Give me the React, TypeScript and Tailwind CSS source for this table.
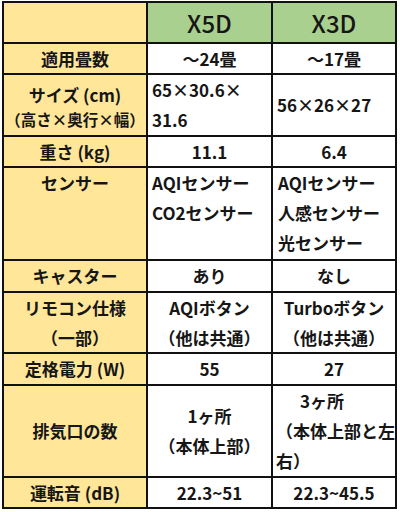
const Y = "bg-[#ffe699]";
const cell = "flex items-center justify-center text-center bg-white";
const head = `flex items-center justify-center text-center ${Y}`;

export default function App() {
  return (
    <div
      className="min-h-[512px] w-[400px] bg-white text-[#161616]"
      style={{ fontFamily: '"Noto Sans CJK JP", "Noto Sans", sans-serif' }}
    >
      <div className="ml-[2px] pt-[1px]">
        <div className="grid w-[395px] grid-cols-[142px_123px_122px] grid-rows-[39px_29px_60px_29px_91px_30px_59px_30px_90px_29px] gap-[2px] border-2 border-[#111] bg-[#111] text-[17px] font-bold leading-[30px]">
          {/* header */}
          <div className={Y} />
          <div className="flex items-center justify-center bg-[#a9d08e] text-[24px] font-medium">X5D</div>
          <div className="flex items-center justify-center bg-[#a9d08e] text-[24px] font-medium">X3D</div>

          {/* 適用畳数 */}
          <div className={head}>適用畳数</div>
          <div className={cell}>～24畳</div>
          <div className={cell}>～17畳</div>

          {/* サイズ */}
          <div className={`${head} flex-col leading-[25px] pt-[3px]`}>
            <span>サイズ (cm)</span>
            <span className="text-[15.5px]">（高さ×奥行×幅）</span>
          </div>
          <div className="flex flex-col justify-center bg-white pl-[4px]">
            <span>65×30.6×</span>
            <span>31.6</span>
          </div>
          <div className="flex items-center bg-white pl-[4px]">56×26×27</div>

          {/* 重さ */}
          <div className={head}>重さ (kg)</div>
          <div className={cell}>11.1</div>
          <div className={cell}>6.4</div>

          {/* センサー */}
          <div className={`${Y} text-center`}>センサー</div>
          <div className="flex flex-col bg-white pl-[4px]">
            <span>AQIセンサー</span>
            <span>CO2センサー</span>
          </div>
          <div className="flex flex-col bg-white pl-[5px]">
            <span>AQIセンサー</span>
            <span>人感センサー</span>
            <span>光センサー</span>
          </div>

          {/* キャスター */}
          <div className={head}>キャスター</div>
          <div className={cell}>あり</div>
          <div className={cell}>なし</div>

          {/* リモコン仕様 */}
          <div className={`${head} flex-col`}>
            <span>リモコン仕様</span>
            <span>（一部）</span>
          </div>
          <div className={`${cell} flex-col`}>
            <span>AQIボタン</span>
            <span>（他は共通）</span>
          </div>
          <div className={`${cell} flex-col`}>
            <span>Turboボタン</span>
            <span>（他は共通）</span>
          </div>

          {/* 定格電力 */}
          <div className={head}>定格電力 (W)</div>
          <div className={cell}>55</div>
          <div className={cell}>27</div>

          {/* 排気口の数 */}
          <div className={head}>排気口の数</div>
          <div className={`${cell} flex-col`}>
            <span>1ヶ所</span>
            <span>（本体上部）</span>
          </div>
          <div className="flex flex-col justify-center bg-white pl-[3px]">
            <span className="pl-[24px]">3ヶ所</span>
            <span className="whitespace-nowrap">（本体上部と左</span>
            <span>右）</span>
          </div>

          {/* 運転音 */}
          <div className={head}>運転音 (dB)</div>
          <div className={cell}>22.3~51</div>
          <div className={cell}>22.3~45.5</div>
        </div>
      </div>
    </div>
  );
}
